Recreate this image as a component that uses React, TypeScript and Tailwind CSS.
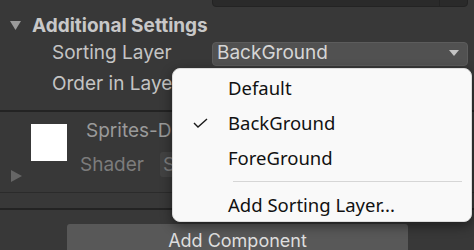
import React from 'react';

const menuItems = [
    { label: 'Default', checked: false },
    { label: 'BackGround', checked: true },
    { label: 'ForeGround', checked: false },
];

function CheckMark() {
    return (
        <svg width="15" height="10" viewBox="0 0 15 10" className="absolute left-[20px] top-[13px]">
            <polyline points="1,5 5,9 14,1" fill="none" stroke="#1a1a1a" strokeWidth="1.4" />
        </svg>
    );
}

export default function App() {
    return (
        <div className="relative w-[474px] h-[250px] overflow-hidden bg-[#383838] font-['Inter',sans-serif] text-[#c4c4c4]">
            {/* Sprite field, cut at top */}
            <div className="h-[7px] flex items-end overflow-hidden">
                <div className="ml-[212px] w-[256px] h-[24px] shrink-0 flex bg-[#2a2a2a] border border-[#232323] rounded-[4px]">
                    <div className="flex-1" />
                    <div className="w-[28px] border-l border-[#232323]" />
                </div>
            </div>

            {/* Additional Settings header */}
            <div className="h-[34px] pt-[4px] flex items-center">
                <svg width="11" height="10" viewBox="0 0 11 10" className="ml-[10px]">
                    <polygon points="0,0 11,0 5.5,9" fill="#9a9a9a" />
                </svg>
                <span className="ml-[11px] text-[19px] font-bold text-[#c8c8c8]">Additional Settings</span>
            </div>

            {/* Sorting Layer */}
            <div className="h-[25px] flex items-center">
                <span className="ml-[52px] w-[160px] text-[19px]">Sorting Layer</span>
                <div className="w-[256px] h-[24px] flex items-center justify-between bg-[#515151] border border-[#5c5c5c] rounded-[4px] pl-[4px] pr-[8px]">
                    <span className="text-[19px] text-[#d6d6d6]">BackGround</span>
                    <svg width="10" height="7" viewBox="0 0 10 7">
                        <polygon points="0,0 10,0 5,6" fill="#c4c4c4" />
                    </svg>
                </div>
            </div>

            {/* Order in Layer (partly under the popup) */}
            <div className="h-[36px] flex items-center">
                <span className="ml-[52px] text-[19px] whitespace-nowrap">Order in Layer</span>
            </div>

            {/* divider */}
            <div className="h-[8px]" />
            <div className="h-[2px] bg-[#232323]" />

            {/* Material */}
            <div className="h-[80px] flex">
                <div className="w-[31px] shrink-0 flex flex-col justify-end pb-[10px]">
                    <svg width="12" height="12" viewBox="0 0 12 12" className="ml-[11px]">
                        <polygon points="0,0 11,6 0,12" fill="#666" />
                    </svg>
                </div>
                <div className="mt-[12px] w-[36px] h-[37px] shrink-0 bg-white" />
                <div className="flex flex-col shrink-0">
                    <span className="ml-[19px] mt-[5px] text-[19px] text-[#9a9a9a] whitespace-nowrap">Sprites-Default</span>
                    <div className="flex items-center ml-[13px] mt-[5px]">
                        <span className="w-[80px] text-[19px] text-[#7c7c7c]">Shader</span>
                        <div className="h-[25px] w-[150px] bg-[#424242] rounded-[3px] pl-[3px] text-[19px] text-[#7c7c7c] leading-[25px] whitespace-nowrap">Sprites/Default</div>
                    </div>
                </div>
            </div>
            <div className="h-[1px] bg-[#2b2b2b]" />
            <div className="h-[15px]" />
            <div className="h-[2px] bg-[#232323]" />
            <div className="h-[14px]" />

            {/* Add Component */}
            <div className="ml-[67px] w-[341px] h-[30px] bg-[#585858] rounded-[3px] flex justify-center pt-[3px] text-[18px] text-[#dedede]">
                Add Component
            </div>

            {/* Sorting layer popup menu */}
            <div className="absolute left-[172px] top-[68px] w-[300px] h-[154px] bg-[#f9f9f9] rounded-[8px] border border-[#dcdcdc] shadow-[0_4px_12px_rgba(0,0,0,0.45)] pt-[1px] font-['Noto_Sans',sans-serif] text-[18.5px] text-[#111]">
                {menuItems.map((item) => (
                    <div key={item.label} className="relative h-[35px] flex items-center pl-[55px]">
                        {item.checked && <CheckMark />}
                        {item.label}
                    </div>
                ))}
                <div className="h-[12px] flex items-center pl-[60px] pr-[9px]">
                    <div className="h-[1px] w-full bg-[#d6d6d6]" />
                </div>
                <div className="h-[35px] flex items-center pl-[55px]">Add Sorting Layer...</div>
            </div>
        </div>
    );
}
